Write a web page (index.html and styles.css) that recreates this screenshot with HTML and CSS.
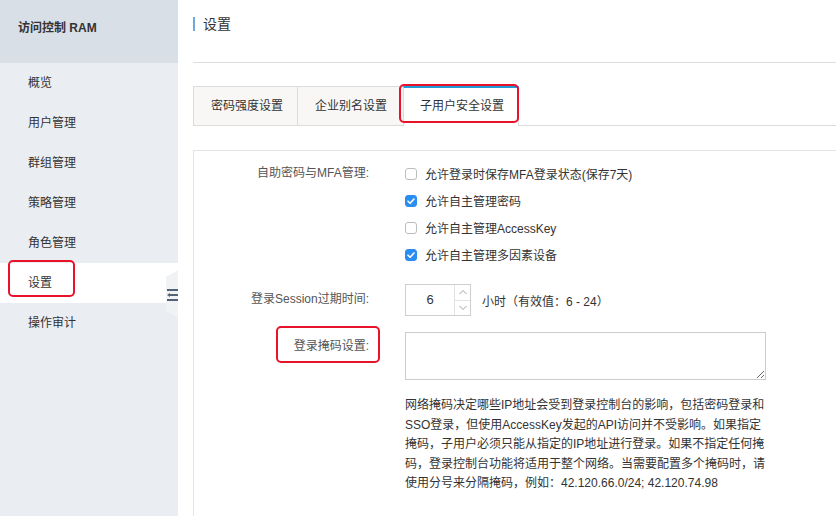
FILE: index.html
```html
<!DOCTYPE html>
<html lang="zh-CN">
<head>
<meta charset="utf-8">
<title>设置 - 访问控制 RAM</title>
<link rel="stylesheet" href="styles.css">
</head>
<body>
<div class="app">
  <aside class="sidebar">
    <div class="side-head">访问控制 RAM</div>
    <nav class="nav">
      <div class="nav-item">概览</div>
      <div class="nav-item">用户管理</div>
      <div class="nav-item">群组管理</div>
      <div class="nav-item">策略管理</div>
      <div class="nav-item">角色管理</div>
      <div class="nav-item active">设置<span class="annot annot-nav"></span></div>
      <div class="nav-item">操作审计</div>
    </nav>
    <div class="collapse">
      <svg width="13" height="48" viewBox="0 0 13 48">
        <polygon points="13,0 1,7 1,41 13,48" fill="#f1f2f4"/>
        <rect x="2" y="19" width="11" height="2" fill="#536277"/>
        <rect x="5" y="24" width="8" height="2" fill="#536277"/>
        <polygon points="2,25 5,23 5,27" fill="#536277"/>
        <rect x="2" y="29" width="11" height="2" fill="#536277"/>
      </svg>
    </div>
  </aside>
  <main class="main">
    <header class="page-head"><h1 class="page-title">设置</h1></header>
    <div class="tabs">
      <div class="tab">密码强度设置</div>
      <div class="tab">企业别名设置</div>
      <div class="tab active">子用户安全设置<span class="annot annot-tab"></span></div>
      <div class="tab-fill"></div>
    </div>
    <section class="panel">
      <div class="form-row">
        <div class="label">自助密码与MFA管理:</div>
        <div class="field checks">
          <label class="check"><span class="box"></span>允许登录时保存MFA登录状态(保存7天)</label>
          <label class="check"><span class="box checked"><svg width="12" height="12" viewBox="0 0 12 12"><path d="M3 6.2 L5.1 8.3 L9 4" fill="none" stroke="#fff" stroke-width="1.6" stroke-linecap="round" stroke-linejoin="round"/></svg></span>允许自主管理密码</label>
          <label class="check"><span class="box"></span>允许自主管理AccessKey</label>
          <label class="check"><span class="box checked"><svg width="12" height="12" viewBox="0 0 12 12"><path d="M3 6.2 L5.1 8.3 L9 4" fill="none" stroke="#fff" stroke-width="1.6" stroke-linecap="round" stroke-linejoin="round"/></svg></span>允许自主管理多因素设备</label>
        </div>
      </div>
      <div class="form-row row-session">
        <div class="label">登录Session过期时间:</div>
        <div class="field inline">
          <div class="number">
            <span class="num-val">6</span>
            <span class="spin">
              <span class="spin-btn"><svg width="10" height="6" viewBox="0 0 10 6"><path d="M1.5 5 L5 1.5 L8.5 5" fill="none" stroke="#a0a0a0" stroke-width="1"/></svg></span>
              <span class="spin-btn"><svg width="10" height="6" viewBox="0 0 10 6"><path d="M1.5 1 L5 4.5 L8.5 1" fill="none" stroke="#a0a0a0" stroke-width="1"/></svg></span>
            </span>
          </div>
          <span class="unit">小时（有效值：6 - 24）</span>
        </div>
      </div>
      <div class="form-row row-mask">
        <div class="label"><span class="label-text">登录掩码设置:<span class="annot annot-label"></span></span></div>
        <div class="field">
          <textarea class="mask"></textarea>
          <p class="help">网络掩码决定哪些IP地址会受到登录控制台的影响，包括密码登录和<br>SSO登录，但使用AccessKey发起的API访问并不受影响。如果指定<br>掩码，子用户必须只能从指定的IP地址进行登录。如果不指定任何掩<br>码，登录控制台功能将适用于整个网络。当需要配置多个掩码时，请<br>使用分号来分隔掩码，例如：42.120.66.0/24; 42.120.74.98</p>
        </div>
      </div>
    </section>
  </main>
</div>
</body>
</html>
```

FILE: styles.css
```css
* { box-sizing: border-box; }
html, body { margin: 0; padding: 0; height: 100%; }
body {
  font-family: "Liberation Sans", "Noto Sans CJK SC", sans-serif;
  font-size: 12px;
  color: #333;
  background: #fff;
  overflow: hidden;
}
.app { display: flex; height: 516px; }

.sidebar {
  width: 178px;
  flex: none;
  background: #eaedf1;
  position: relative;
}
.side-head {
  height: 63px;
  background: #d9dfe7;
  padding: 20px 0 0 18px;
  line-height: 16px;
  font-weight: bold;
  color: #333;
}
.nav-item {
  height: 40px;
  line-height: 40px;
  padding-left: 28px;
  color: #333;
  position: relative;
}
.nav-item.active { background: #fff; }
.collapse {
  position: absolute;
  left: 165px;
  top: 270px;
  width: 13px;
  height: 48px;
}
.collapse svg { display: block; }

.annot {
  position: absolute;
  border: 2.5px solid #e8132b;
  border-radius: 5px;
  pointer-events: none;
}
.annot-nav { left: 8px; top: -3px; width: 67px; height: 37px; }
.annot-tab { left: -5px; top: -4px; width: 120px; height: 39px; }
.annot-label { left: -18px; top: -12px; width: 104px; height: 37px; }

.main {
  flex: 1;
  padding-left: 15px;
  display: flex;
  flex-direction: column;
  min-width: 0;
}
.page-head {
  height: 63px;
  border-bottom: 1px solid #dedede;
  padding-top: 17px;
}
.page-title {
  margin: 0;
  font-size: 14px;
  font-weight: normal;
  line-height: 14px;
  height: 14px;
  border-left: 2px solid #6fa8dc;
  padding-left: 8px;
  color: #333;
}

.tabs {
  display: flex;
  margin-top: 23px;
  height: 40px;
}
.tab {
  line-height: 38px;
  background: #f8f7f6;
  border: 1px solid #dcdcdc;
  border-right: none;
  color: #333;
  position: relative;
}
.tab:first-child { width: 104px; padding: 0 0 0 17px; }
.tab:nth-child(2) { width: 106px; padding: 0 0 0 17px; }
.tab.active {
  width: 116px;
  background: #fff;
  border-top: 2px solid #1f9bd6;
  border-bottom: none;
  border-right: 1px solid #dcdcdc;
  padding: 0 0 0 16px;
  line-height: 37px;
}
.tab-fill { flex: 1; border-bottom: 1px solid #dcdcdc; }

.panel {
  margin-top: 24px;
  flex: 1;
  border-top: 1px solid #e4e4e4;
  border-left: 1px solid #e4e4e4;
  padding-top: 9px;
}
.form-row { display: flex; }
.label {
  width: 175px;
  flex: none;
  text-align: right;
  color: #555;
  line-height: 27px;
}
.field { margin-left: 36px; }
.check {
  display: flex;
  align-items: center;
  height: 27px;
  color: #333;
}
.box {
  width: 12px;
  height: 12px;
  border: 1px solid #bdbdbd;
  border-radius: 3px;
  margin-right: 8px;
  background: #fff;
  display: flex;
}
.box.checked { background: #2a8ef0; border-color: #2a8ef0; }
.box.checked svg { margin: -1px; }

.row-session { margin-top: 16px; }
.row-session .label { line-height: 31px; }
.inline { display: flex; align-items: center; }
.number {
  width: 66px;
  height: 32px;
  border: 1px solid #cfcfcf;
  display: flex;
}
.num-val {
  flex: 1;
  text-align: center;
  line-height: 30px;
  font-size: 13px;
  color: #333;
}
.spin {
  width: 16px;
  border-left: 1px solid #e2e2e2;
  display: flex;
  flex-direction: column;
}
.spin-btn {
  flex: 1;
  display: flex;
  align-items: center;
  justify-content: center;
}
.spin-btn + .spin-btn { border-top: 1px solid #e2e2e2; }
.unit { margin-left: 11px; color: #333; }

.row-mask { margin-top: 16px; }
.row-mask .label { padding-top: 6px; line-height: 16px; }
.label-text { position: relative; display: inline-block; }
.mask {
  display: block;
  width: 361px;
  height: 48px;
  border: 1px solid #cccccc;
  margin: 0;
  padding: 4px;
  font: inherit;
  resize: both;
}
.help {
  margin: 16px 0 0;
  line-height: 19.6px;
  color: #333;
  white-space: nowrap;
}
```
